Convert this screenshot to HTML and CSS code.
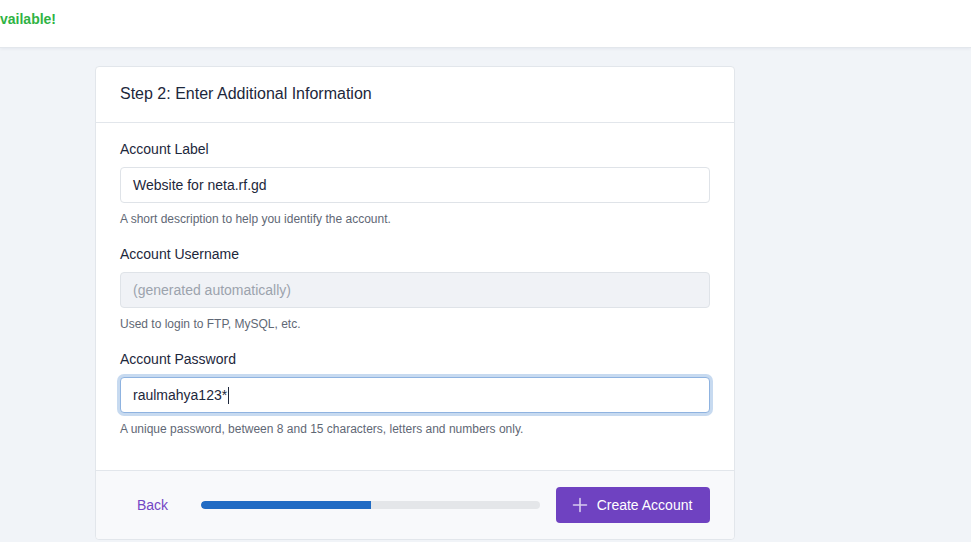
FILE: index.html
```html
<!DOCTYPE html>
<html lang="en">
<head>
<meta charset="utf-8">
<title>Create Account</title>
<link rel="stylesheet" href="styles.css">
</head>
<body>
<header class="topbar">
  <span class="available">vailable!</span>
</header>
<main class="page">
  <section class="card">
    <div class="card-header">Step 2: Enter Additional Information</div>
    <div class="card-body">
      <div class="group">
        <label class="label">Account Label</label>
        <div class="input">Website for neta.rf.gd</div>
        <div class="hint">A short description to help you identify the account.</div>
      </div>
      <div class="group">
        <label class="label">Account Username</label>
        <div class="input disabled">(generated automatically)</div>
        <div class="hint">Used to login to FTP, MySQL, etc.</div>
      </div>
      <div class="group">
        <label class="label">Account Password</label>
        <div class="input focused">raulmahya123*<span class="caret"></span></div>
        <div class="hint">A unique password, between 8 and 15 characters, letters and numbers only.</div>
      </div>
    </div>
    <div class="card-footer">
      <a class="back">Back</a>
      <div class="progress"><div class="progress-bar" style="width:50%"></div></div>
      <button class="btn">
        <svg width="16" height="16" viewBox="0 0 16 16" fill="none" stroke="currentColor" stroke-width="1.6" stroke-linecap="round"><path d="M8 1.5v13M1.5 8h13"/></svg>
        <span>Create Account</span>
      </button>
    </div>
  </section>
</main>
</body>
</html>
```

FILE: styles.css
```css
* { box-sizing: border-box; }
html, body { margin: 0; padding: 0; }
body {
  background: #f1f4f8;
  font-family: "Liberation Sans", Arial, sans-serif;
  color: #1d273b;
  font-size: 14px;
  height: 542px;
  overflow: hidden;
}
.topbar {
  height: 48px;
  background: #fff;
  border-bottom: 1px solid #e3e7ec;
  box-shadow: 0 1px 3px rgba(0, 30, 80, 0.06);
  display: flex;
  align-items: center;
  padding-bottom: 10px;
}
.available {
  color: #2fb344;
  font-weight: bold;
  font-size: 14px;
  margin-left: 0;
}
.page {
  padding: 18px 0 0 95px;
}
.card {
  width: 640px;
  background: #fff;
  border: 1px solid #e2e6eb;
  border-radius: 4px;
}
.card-header {
  height: 56px;
  padding: 0 24px 2px;
  display: flex;
  align-items: center;
  font-size: 16px;
  border-bottom: 1px solid #e2e6eb;
}
.card-body {
  padding: 16px 24px 16px;
}
.group { margin-bottom: 16px; }
.label {
  display: block;
  line-height: 21px;
  margin-bottom: 7px;
  font-size: 14px;
}
.input {
  height: 36px;
  border: 1px solid #dfe3e8;
  border-radius: 4px;
  padding: 0 12px;
  display: flex;
  align-items: center;
  font-size: 14px;
  background: #fff;
}
.input.disabled {
  background: #f0f2f6;
  color: #9ca3ad;
}
.input.focused {
  border-color: #8fb3e0;
  box-shadow: 0 0 0 3px rgba(32, 107, 196, 0.25);
}
.caret {
  display: inline-block;
  width: 1px;
  height: 17px;
  background: #1d273b;
  margin-left: 1px;
}
.hint {
  margin-top: 7px;
  line-height: 18px;
  font-size: 12px;
  color: #5f6875;
}
.card-footer {
  background: #f8f9fb;
  border-top: 1px solid #e2e6eb;
  padding: 16px 24px;
  display: flex;
  align-items: center;
  gap: 16px;
  border-radius: 0 0 4px 4px;
}
.back {
  color: #7346c4;
  font-size: 14px;
  padding: 0 17px 0 17px;
  line-height: 36px;
}
.progress {
  flex: 1;
  height: 8px;
  background: #e4e6e9;
  border-radius: 4px;
  overflow: hidden;
}
.progress-bar {
  height: 100%;
  background: #206bc4;
  border-radius: 4px 0 0 4px;
}
.btn {
  height: 36px;
  width: 154px;
  background: #6f42c1;
  color: #fff;
  border: none;
  border-radius: 4px;
  font-family: inherit;
  font-size: 14px;
  display: flex;
  align-items: center;
  justify-content: center;
  gap: 9px;
  padding: 0 2px 0 0;
}
.btn svg { color: #d7cbef; }
```
